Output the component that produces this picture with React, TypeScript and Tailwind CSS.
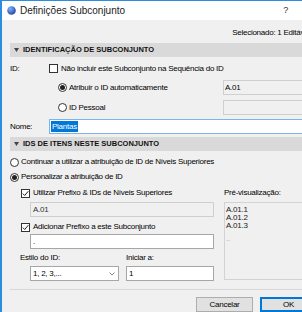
import React from "react";

const Check = ({ checked }: { checked?: boolean }) => (
  <div className="w-[9px] h-[9px] border border-[#333] bg-white flex items-center justify-center shrink-0">
    {checked && (
      <svg width="7" height="7" viewBox="0 0 7 7">
        <path d="M0.8 3.6 L2.7 5.5 L6.3 1.2" fill="none" stroke="#222" strokeWidth="1" />
      </svg>
    )}
  </div>
);

const Radio = ({ checked }: { checked?: boolean }) => (
  <div className="w-[9px] h-[9px] rounded-full border border-[#333] bg-white flex items-center justify-center shrink-0">
    {checked && <div className="w-[5px] h-[5px] rounded-full bg-[#222]" />}
  </div>
);

const Section = ({ title }: { title: string }) => (
  <div className="h-[14px] bg-[#d9d9d9] flex items-center pl-[4px]">
    <svg width="5" height="4" viewBox="0 0 5 4" className="shrink-0">
      <path d="M0 0 H5 L2.5 4 Z" fill="#444" />
    </svg>
    <span className="ml-[4px] font-bold text-[7.5px] tracking-normal text-[#111]">{title}</span>
  </div>
);

export default function App() {
  return (
    <div className="w-[302px] h-[312px] overflow-hidden">
      <div className="w-[320px] h-[312px] bg-[#f0f0f0] border-l-2 border-t border-[#2b8ce0] flex flex-col text-[8px] tracking-[-0.25px] text-black font-['Liberation_Sans',Arial,sans-serif] leading-none">
        {/* title bar */}
        <div className="h-[19px] bg-white flex items-center pl-[5px] pr-[32px]">
          <svg width="9" height="9" viewBox="0 0 9 9">
            <defs>
              <radialGradient id="g" cx="0.35" cy="0.3" r="0.8">
                <stop offset="0" stopColor="#7fb2ff" />
                <stop offset="1" stopColor="#1c3f9a" />
              </radialGradient>
            </defs>
            <circle cx="4.5" cy="4.5" r="4.3" fill="url(#g)" />
          </svg>
          <span className="ml-[4px] text-[10px] tracking-normal text-[#222]">Definições Subconjunto</span>
          <span className="ml-auto text-[9px] text-[#333]">?</span>
        </div>

        <div className="flex flex-col pl-[8px] pr-[10px]">
          <div className="h-[14px] mt-[6px] flex items-center justify-end">
            <span>Selecionado: 1 Editável</span>
          </div>

          <div className="mt-[3px]">
            <Section title="IDENTIFICAÇÃO DE SUBCONJUNTO" />
          </div>

          <div className="mt-[6px] h-[11px] flex items-center">
            <span className="w-[39px]">ID:</span>
            <Check />
            <span className="ml-[3px]">Não incluir este Subconjunto na Sequência do ID</span>
          </div>

          <div className="mt-[6px] h-[15px] flex items-center">
            <div className="ml-[48px] flex items-center flex-1">
              <Radio checked />
              <span className="ml-[2px]">Atribuir o ID automaticamente</span>
            </div>
            <div className="w-[87px] h-[15px] border border-[#cfcfcf] bg-[#f0f0f0] flex items-center pl-[1px]">A.01</div>
          </div>

          <div className="mt-[5px] h-[15px] flex items-center">
            <div className="ml-[48px] flex items-center flex-1">
              <Radio />
              <span className="ml-[2px]">ID Pessoal</span>
            </div>
            <div className="w-[87px] h-[15px] border border-[#cfcfcf] bg-[#f0f0f0]" />
          </div>

          <div className="mt-[4px] h-[15px] flex items-center">
            <span className="w-[39px]">Nome:</span>
            <div className="flex-1 h-[15px] border border-[#7eb4ea] bg-white flex items-center pl-[1px]">
              <span className="bg-[#0078d7] text-white px-[1px] h-[11px] flex items-center">Plantas</span>
            </div>
          </div>

          <div className="mt-[3px]">
            <Section title="IDS DE ITENS NESTE SUBCONJUNTO" />
          </div>

          <div className="mt-[5px] h-[12px] flex items-center">
            <Radio />
            <span className="ml-[2px]">Continuar a utilizar a atribuição de ID de Níveis Superiores</span>
          </div>

          <div className="mt-[3px] h-[12px] flex items-center">
            <Radio checked />
            <span className="ml-[2px]">Personalizar a atribuição de ID</span>
          </div>

          <div className="mt-[4px] flex">
            <div className="w-[204px] flex flex-col">
              <div className="h-[12px] flex items-center pl-[11px]">
                <Check checked />
                <span className="ml-[3px]">Utilizar Prefixo &amp; IDs de Níveis Superiores</span>
              </div>
              <div className="mt-[3px] ml-[20px] h-[15px] border border-[#cfcfcf] bg-[#f0f0f0] flex items-center pl-[2px] text-[#333]">
                A.01
              </div>
              <div className="mt-[4px] h-[12px] flex items-center pl-[11px]">
                <Check checked />
                <span className="ml-[3px]">Adicionar Prefixo a este Subconjunto</span>
              </div>
              <div className="mt-[1px] ml-[20px] h-[15px] border border-[#a6a6a6] bg-white flex items-center pl-[2px]">
                .
              </div>
              <div className="mt-[3px] h-[12px] flex items-center">
                <span className="ml-[10px] w-[106px]">Estilo do ID:</span>
                <span>Iniciar a:</span>
              </div>
              <div className="mt-[2px] h-[15px] flex items-center pl-[20px] gap-[7px]">
                <div className="w-[89px] h-[15px] border border-[#a6a6a6] bg-white flex items-center pl-[2px] pr-[3px]">
                  <span className="flex-1">1, 2, 3,...</span>
                  <svg width="6" height="4" viewBox="0 0 6 4">
                    <path d="M0.5 0.5 L3 3 L5.5 0.5" fill="none" stroke="#777" strokeWidth="0.9" />
                  </svg>
                </div>
                <div className="flex-1 h-[15px] border border-[#a6a6a6] bg-white flex items-center pl-[2px]">1</div>
              </div>
            </div>
            <div className="flex-1 ml-[10px] flex flex-col">
              <div className="h-[12px] flex items-center">Pré-visualização:</div>
              <div className="mt-[3px] h-[78px] border border-[#d3d3d3] pt-[3px] pl-[1px] flex flex-col leading-[8px] text-[#222]">
                <span>A.01.1</span>
                <span>A.01.2</span>
                <span>A.01.3</span>
                <span className="mt-[5px] text-[#7bb]">..</span>
              </div>
            </div>
          </div>

          <div className="mt-[8px] border-t border-[#d7d7d7]" />

          <div className="mt-[7px] -mr-[7px] flex justify-end gap-[7px]">
            <div className="w-[57px] h-[15px] border border-[#adadad] bg-[#e1e1e1] flex items-center justify-center">Cancelar</div>
            <div className="w-[57px] h-[15px] border-2 border-[#0078d7] bg-[#e1e1e1] flex items-center justify-center">OK</div>
          </div>
        </div>
      </div>
    </div>
  );
}
